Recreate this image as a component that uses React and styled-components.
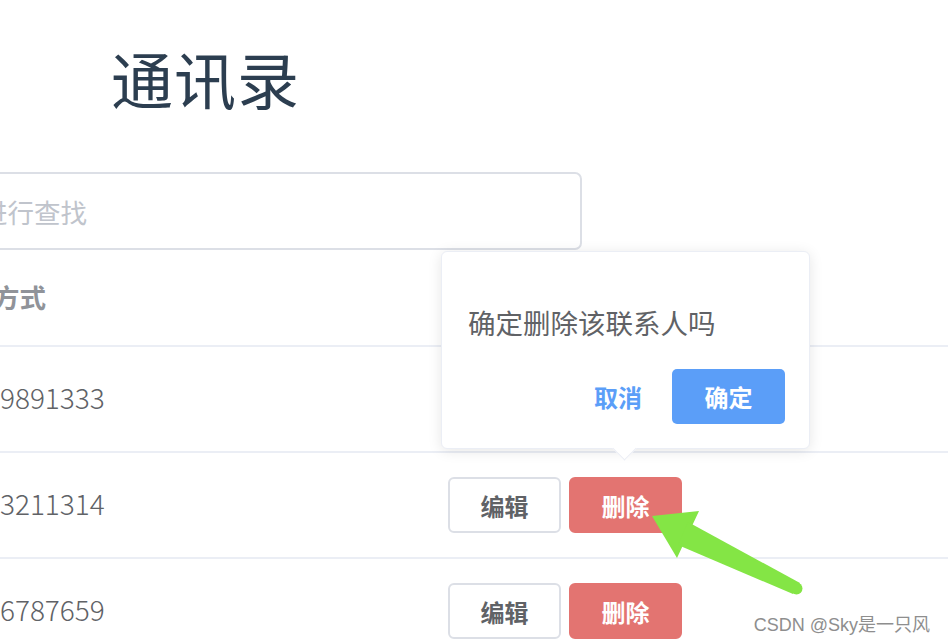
import React from "react";
import styled, { createGlobalStyle } from "styled-components";

const Global = createGlobalStyle`
  html, body { margin: 0; padding: 0; background: #fff; }
  body { font-family: "Noto Sans CJK SC", "Noto Sans", sans-serif; }
`;

const Page = styled.div`
  position: relative;
  width: 948px;
  height: 644px;
  overflow: hidden;
  background: #fff;
  display: flex;
  flex-direction: column;
  & > * { flex-shrink: 0; }
`;

const Title = styled.h1`
  margin: 38px 0 0 111px;
  height: 80px;
  line-height: 80px;
  font-size: 62px;
  font-weight: 400;
  color: #2c3e50;
  letter-spacing: 1px;
`;

const Search = styled.input`
  box-sizing: border-box;
  margin: 54px 0 0 -147px;
  width: 729px;
  height: 78px;
  padding: 0 20px;
  border: 2px solid #dcdfe6;
  border-radius: 7px;
  font-family: "Noto Sans CJK SC", sans-serif;
  font-size: 26.5px;
  color: #606266;
  outline: none;
  &::placeholder { color: #c0c4cc; }
`;

const Table = styled.div`
  margin-left: -72px;
  display: flex;
  flex-direction: column;
`;

const Row = styled.div`
  display: grid;
  grid-template-columns: 508px 1fr;
  align-items: center;
  height: ${p => p.$h}px;
  border-bottom: 2px solid #ebeef5;
  box-sizing: border-box;
`;

const Cell = styled.div`
  padding-left: 12px;
  font-size: ${p => (p.$head ? 26.5 : 28)}px;
  font-weight: ${p => (p.$head ? 700 : 300)};
  color: ${p => (p.$head ? "#909399" : "#606266")};
  margin-top: ${p => p.$lift || 0}px;
  display: flex;
  gap: 8px;
  align-items: center;
`;

const Btn = styled.button`
  box-sizing: border-box;
  width: 113px;
  height: 56px;
  border-radius: 6px;
  font-family: "Noto Sans CJK SC", sans-serif;
  font-size: 24px;
  font-weight: 600;
  cursor: pointer;
  border: 2px solid ${p => (p.$danger ? "#e37471" : "#dcdfe6")};
  background: ${p => (p.$danger ? "#e37471" : "#fff")};
  color: ${p => (p.$danger ? "#fff" : "#606266")};
`;

const Popover = styled.div`
  position: absolute;
  left: 441px;
  top: 251px;
  width: 369px;
  box-sizing: border-box;
  padding: 50px 24px 24px 26px;
  background: #fff;
  border: 1px solid #ebeef5;
  border-radius: 6px;
  box-shadow: 0 2px 14px rgba(0, 0, 0, 0.1);
  &::after {
    content: "";
    position: absolute;
    left: 174px;
    bottom: -9px;
    width: 16px;
    height: 16px;
    background: #fff;
    border-right: 1px solid #ebeef5;
    border-bottom: 1px solid #ebeef5;
    transform: rotate(45deg);
  }
`;

const Message = styled.p`
  margin: 0;
  line-height: 40px;
  font-size: 27.5px;
  color: #606266;
`;

const Actions = styled.div`
  margin-top: 27px;
  display: flex;
  justify-content: flex-end;
  align-items: center;
  gap: 30px;
`;

const TextBtn = styled.button`
  border: none;
  background: none;
  padding: 0;
  font-family: "Noto Sans CJK SC", sans-serif;
  font-size: 24px;
  font-weight: 700;
  color: #5b9ef8;
`;

const PrimaryBtn = styled.button`
  width: 113px;
  height: 55px;
  border: none;
  border-radius: 5px;
  background: #5b9ef8;
  color: #fff;
  font-family: "Noto Sans CJK SC", sans-serif;
  font-size: 24px;
  font-weight: 700;
`;

const Arrow = styled.svg`
  position: absolute;
  left: 0;
  top: 0;
  pointer-events: none;
`;

const Watermark = styled.div`
  position: absolute;
  right: 18px;
  bottom: 8px;
  font-family: "Liberation Sans", "Noto Sans CJK SC", sans-serif;
  font-size: 18px;
  color: #8e8e8e;
  text-shadow: 0 0 1px #fff;
`;

const rows = ["13209891333", "13203211314", "13206787659"];

export default function App() {
  return (
    <>
      <Global />
      <Page>
        <Title>通讯录</Title>
        <Search placeholder="输入姓名进行查找" />
        <Table>
          <Row $h={97}>
            <Cell $head $lift={-3}>联系方式</Cell>
            <Cell $head $lift={-3}>操作</Cell>
          </Row>
          {rows.map(r => (
            <Row key={r} $h={106}>
              <Cell $lift={-4}>{r}</Cell>
              <Cell>
                <Btn>编辑</Btn>
                <Btn $danger>删除</Btn>
              </Cell>
            </Row>
          ))}
        </Table>
        <Popover>
          <Message>确定删除该联系人吗</Message>
          <Actions>
            <TextBtn>取消</TextBtn>
            <PrimaryBtn>确定</PrimaryBtn>
          </Actions>
        </Popover>
        <Arrow width="948" height="644" viewBox="0 0 948 644">
          <polygon points="652,516 699,511 677,558" fill="#84e545" />
          <polygon points="688,522 678,545 793,594 800,583" fill="#84e545" />
          <circle cx="796.5" cy="588.5" r="6" fill="#84e545" />
        </Arrow>
        <Watermark>CSDN @Sky是一只风</Watermark>
      </Page>
    </>
  );
}
